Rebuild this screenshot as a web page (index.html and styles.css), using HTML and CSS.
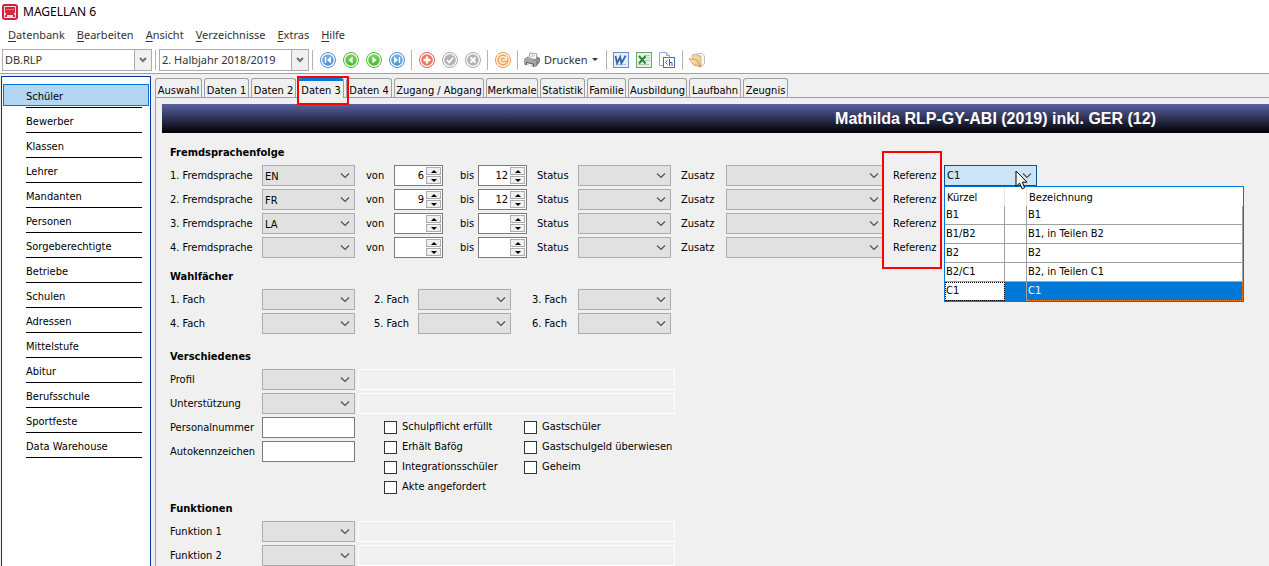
FILE: index.html
```html
<!DOCTYPE html>
<html lang="de">
<head>
<meta charset="utf-8">
<title>MAGELLAN 6</title>
<link rel="stylesheet" href="styles.css">
</head>
<body>
<svg class="defs" aria-hidden="true">
  <defs>
    <linearGradient id="blue" x1="0" y1="0" x2="0" y2="1"><stop offset="0" stop-color="#7fb2ea"/><stop offset="1" stop-color="#4a8fdc"/></linearGradient>
    <linearGradient id="green" x1="0" y1="0" x2="0" y2="1"><stop offset="0" stop-color="#7bd463"/><stop offset="1" stop-color="#48b934"/></linearGradient>
    <linearGradient id="paper" x1="0" y1="0" x2="1" y2="1"><stop offset="0" stop-color="#fff6d8"/><stop offset="1" stop-color="#e3b162"/></linearGradient>
  </defs>
</svg>

<header class="titlebar">
  <svg class="app-icon" viewBox="0 0 16 16"><rect x="0" y="0" width="16" height="16" rx="3" fill="#d81e3f"/><rect x="2" y="2" width="12" height="12" rx="1" fill="#f9dfe0"/><path d="M3 3h10v6H3zM4 9h8v2H4zM3 11h2v2H3zM11 11h2v2h-2z" fill="#d4283c"/><path d="M4 5.500h8" stroke="#e8707c"/></svg>
  <span>MAGELLAN 6</span>
</header>

<nav class="menubar">
  <button><u>D</u>atenbank</button>
  <button><u>B</u>earbeiten</button>
  <button><u>A</u>nsicht</button>
  <button><u>V</u>erzeichnisse</button>
  <button><u>E</u>xtras</button>
  <button><u>H</u>ilfe</button>
</nav>

<div class="toolbar">
  <select class="bar-select" aria-label="Datenbank"><option>DB.RLP</option></select>
  <span class="sep"></span>
  <select class="bar-select" aria-label="Zeitraum"><option>2. Halbjahr 2018/2019</option></select>
  <span class="sep"></span>
  <button class="tool" aria-label="Erster"><svg viewBox="0 0 16 16"><circle cx="8" cy="8" r="7.5" fill="#fff" stroke="#4a8ddb"/><circle cx="8" cy="8" r="5.8" fill="url(#blue)"/><path d="M5.5 5v6" stroke="#fff" stroke-width="1.4"/><path d="M11 4.6v6.8L7 8z" fill="#fff"/></svg></button>
  <button class="tool" aria-label="Zurück"><svg viewBox="0 0 16 16"><circle cx="8" cy="8" r="7.5" fill="#fff" stroke="#4cb938"/><circle cx="8" cy="8" r="5.8" fill="url(#green)"/><path d="M9.6 4.4v7.2L5.4 8z" fill="#fff"/></svg></button>
  <button class="tool" aria-label="Weiter"><svg viewBox="0 0 16 16"><circle cx="8" cy="8" r="7.5" fill="#fff" stroke="#4cb938"/><circle cx="8" cy="8" r="5.8" fill="url(#green)"/><path d="M6.4 4.4v7.2L10.6 8z" fill="#fff"/></svg></button>
  <button class="tool" aria-label="Letzter"><svg viewBox="0 0 16 16"><circle cx="8" cy="8" r="7.5" fill="#fff" stroke="#4a8ddb"/><circle cx="8" cy="8" r="5.8" fill="url(#blue)"/><path d="M10.5 5v6" stroke="#fff" stroke-width="1.4"/><path d="M5 4.6v6.8L9 8z" fill="#fff"/></svg></button>
  <span class="sep"></span>
  <button class="tool" aria-label="Neu"><svg viewBox="0 0 16 16"><circle cx="8" cy="8" r="7.5" fill="#fff" stroke="#e8604c"/><circle cx="8" cy="8" r="5.8" fill="#ee7460"/><path d="M8 4.5v7M4.5 8h7" stroke="#fff" stroke-width="2.4"/></svg></button>
  <button class="tool" aria-label="Speichern"><svg viewBox="0 0 16 16"><circle cx="8" cy="8" r="7.5" fill="#fff" stroke="#a8a8a8"/><circle cx="8" cy="8" r="5.8" fill="#b3b3b3"/><path d="M5 8l2.2 2.5L11 5.5" stroke="#fff" stroke-width="1.6" fill="none"/></svg></button>
  <button class="tool" aria-label="Verwerfen"><svg viewBox="0 0 16 16"><circle cx="8" cy="8" r="7.5" fill="#fff" stroke="#a8a8a8"/><circle cx="8" cy="8" r="5.8" fill="#b3b3b3"/><path d="M5.5 5.5l5 5M10.5 5.5l-5 5" stroke="#fff" stroke-width="1.8"/></svg></button>
  <span class="sep"></span>
  <button class="tool" aria-label="Aktualisieren"><svg viewBox="0 0 16 16"><circle cx="8" cy="8" r="7.5" fill="#fff" stroke="#f0953c"/><circle cx="8" cy="8" r="5.8" fill="#f5a75c"/><path d="M10.8 10A3.4 3.4 0 1 1 11 6.200M11.400 4.500v3.300H8.500L7 9" stroke="#fff" stroke-width="1.2" fill="none"/></svg></button>
  <span class="sep"></span>
  <button class="tool print"><svg viewBox="0 0 16 16"><path d="M5 6l1-5 7 1-1 6z" fill="#fff" stroke="#888" stroke-width=".8"/><path d="M7 3l4 .6M6.7 4.6l4 .6" stroke="#aaa" stroke-width=".7"/><path d="M0 7l4-2.500 1 2 7 1 1-3 3 1.500V10l-4 5-12-2.500z" fill="#858585"/><path d="M0 7l4-1.500L12 9v6L0 12.500z" fill="#a6a6a6"/><path d="M2 10l8 1.800v3L2 13z" fill="#555"/><path d="M3 11l6 1.500-.5 2.500L3 13.800z" fill="#e8e8e8"/><circle cx="13.600" cy="8.500" r=".8" fill="#8fd06a"/></svg><span>Drucken</span><i class="caret"></i></button>
  <span class="sep"></span>
  <button class="tool" aria-label="Word"><svg viewBox="0 0 16 16"><rect x=".5" y=".5" width="15" height="15" fill="#e6eefb" stroke="#6b8fc9"/><path d="M3 12.500h10M11 4h3" stroke="#a9c1e8"/><path d="M2.500 4l1.600 7.200L7.200 5l1.200 6.200L12.500 4" stroke="#3464b0" stroke-width="1.800" fill="none"/></svg></button>
  <button class="tool" aria-label="Excel"><svg viewBox="0 0 16 16"><rect x=".5" y=".5" width="15" height="15" fill="#e5f3e2" stroke="#6fa56d"/><path d="M9 3.500h5M9 6h5M9 8.500h5M2 12.500h11" stroke="#a7cfa3"/><path d="M3 4l6.500 7.500M9.500 4L3 11.500" stroke="#2f8340" stroke-width="2" fill="none"/></svg></button>
  <button class="tool" aria-label="HTML"><svg viewBox="0 0 16 16"><path d="M.5.5h7l3 3v10H.5z" fill="#fff" stroke="#92acd6"/><path d="M7.500.5v3h3" fill="#dbe6f7" stroke="#92acd6"/><rect x="4.500" y="5.500" width="11" height="10" fill="#fff" stroke="#4b6ea9"/><path d="M8.500 8.500L6.500 10.500l2 2M10.500 7v7M10.500 10.500h2.500V14" stroke="#3560a8" fill="none"/></svg></button>
  <span class="sep"></span>
  <button class="tool" aria-label="Öffnen"><svg viewBox="0 0 16 16"><path d="M8 1.500h5l2.500 2.500v8L12 14.500z" fill="#f7f7f7" stroke="#aaa" stroke-width=".7"/><path d="M3 3l4-1 1.500 1.500 3.500.5V14L4 11z" fill="#f1d59a" stroke="#c39a52" stroke-width=".6"/><path d="M0 6.500l8 1.500 4 7-7.500-2z" fill="url(#paper)" stroke="#bd8a3c" stroke-width=".7"/></svg></button>
</div>

<div class="workspace">
  <nav class="sidebar">
    <a class="active" href="#"><span>Schüler</span></a>
    <a href="#"><span>Bewerber</span></a>
    <a href="#"><span>Klassen</span></a>
    <a href="#"><span>Lehrer</span></a>
    <a href="#"><span>Mandanten</span></a>
    <a href="#"><span>Personen</span></a>
    <a href="#"><span>Sorgeberechtigte</span></a>
    <a href="#"><span>Betriebe</span></a>
    <a href="#"><span>Schulen</span></a>
    <a href="#"><span>Adressen</span></a>
    <a href="#"><span>Mittelstufe</span></a>
    <a href="#"><span>Abitur</span></a>
    <a href="#"><span>Berufsschule</span></a>
    <a href="#"><span>Sportfeste</span></a>
    <a href="#"><span>Data Warehouse</span></a>
  </nav>

  <main class="main">
    <div class="tabs" role="tablist">
      <button role="tab">Auswahl</button>
      <button role="tab">Daten 1</button>
      <button role="tab">Daten 2</button>
      <button role="tab" class="current" aria-selected="true">Daten 3<i class="mark mark-tab"></i></button>
      <button role="tab">Daten 4</button>
      <button role="tab">Zugang / Abgang</button>
      <button role="tab">Merkmale</button>
      <button role="tab">Statistik</button>
      <button role="tab">Familie</button>
      <button role="tab">Ausbildung</button>
      <button role="tab">Laufbahn</button>
      <button role="tab">Zeugnis</button>
    </div>

    <div class="page">
      <h1 class="banner">Mathilda RLP-GY-ABI (2019) inkl. GER (12)</h1>

      <form class="form">
        <section>
          <h2>Fremdsprachenfolge</h2>
          <div class="languages">
            <label for="l1">1. Fremdsprache</label><select id="l1"><option>EN</option></select>
            <label for="v1">von</label><span class="spin"><input id="v1" value="6"><span><button type="button" class="up" aria-label="mehr"></button><button type="button" class="down" aria-label="weniger"></button></span></span>
            <label for="b1">bis</label><span class="spin"><input id="b1" value="12"><span><button type="button" class="up" aria-label="mehr"></button><button type="button" class="down" aria-label="weniger"></button></span></span>
            <label for="s1">Status</label><select id="s1"><option></option></select>
            <label for="z1">Zusatz</label><select id="z1" class="wide"><option></option></select>
            <label for="r1">Referenz</label>
            <div class="lookup">
              <select id="r1" class="open"><option>C1</option></select>
              <table class="list">
                <thead><tr><th class="key">Kürzel</th><th class="gap"></th><th>Bezeichnung</th></tr></thead>
                <tbody>
                  <tr><td>B1</td><td></td><td>B1</td></tr>
                  <tr><td>B1/B2</td><td></td><td>B1, in Teilen B2</td></tr>
                  <tr><td>B2</td><td></td><td>B2</td></tr>
                  <tr><td>B2/C1</td><td></td><td>B2, in Teilen C1</td></tr>
                  <tr class="picked"><td>C1</td><td></td><td>C1</td></tr>
                </tbody>
              </table>
              <svg class="pointer" viewBox="0 0 13 20"><path d="M1 1v15.500l3.600-3.400 2.500 5.700 2.600-1.100-2.500-5.500H12z" fill="#fff" stroke="#000"/></svg>
            </div>

            <label for="l2">2. Fremdsprache</label><select id="l2"><option>FR</option></select>
            <label for="v2">von</label><span class="spin"><input id="v2" value="9"><span><button type="button" class="up" aria-label="mehr"></button><button type="button" class="down" aria-label="weniger"></button></span></span>
            <label for="b2">bis</label><span class="spin"><input id="b2" value="12"><span><button type="button" class="up" aria-label="mehr"></button><button type="button" class="down" aria-label="weniger"></button></span></span>
            <label for="s2">Status</label><select id="s2"><option></option></select>
            <label for="z2">Zusatz</label><select id="z2" class="wide"><option></option></select>
            <span class="last">Referenz</span>

            <label for="l3">3. Fremdsprache</label><select id="l3"><option>LA</option></select>
            <label for="v3">von</label><span class="spin"><input id="v3"><span><button type="button" class="up" aria-label="mehr"></button><button type="button" class="down" aria-label="weniger"></button></span></span>
            <label for="b3">bis</label><span class="spin"><input id="b3"><span><button type="button" class="up" aria-label="mehr"></button><button type="button" class="down" aria-label="weniger"></button></span></span>
            <label for="s3">Status</label><select id="s3"><option></option></select>
            <label for="z3">Zusatz</label><select id="z3" class="wide"><option></option></select>
            <span class="last">Referenz</span>

            <label for="l4">4. Fremdsprache</label><select id="l4"><option></option></select>
            <label for="v4">von</label><span class="spin"><input id="v4"><span><button type="button" class="up" aria-label="mehr"></button><button type="button" class="down" aria-label="weniger"></button></span></span>
            <label for="b4">bis</label><span class="spin"><input id="b4"><span><button type="button" class="up" aria-label="mehr"></button><button type="button" class="down" aria-label="weniger"></button></span></span>
            <label for="s4">Status</label><select id="s4"><option></option></select>
            <label for="z4">Zusatz</label><select id="z4" class="wide"><option></option></select>
            <span class="last">Referenz<i class="mark mark-ref"></i></span>
          </div>
        </section>

        <section class="near">
          <h2>Wahlfächer</h2>
          <div class="subjects">
            <label for="f1">1. Fach</label><select id="f1"><option></option></select>
            <label for="f2">2. Fach</label><select id="f2"><option></option></select>
            <label for="f3">3. Fach</label><select id="f3"><option></option></select>
            <label for="f4">4. Fach</label><select id="f4"><option></option></select>
            <label for="f5">5. Fach</label><select id="f5"><option></option></select>
            <label for="f6">6. Fach</label><select id="f6"><option></option></select>
          </div>
        </section>

        <section class="far">
          <h2>Verschiedenes</h2>
          <div class="pairs">
            <label for="p1">Profil</label><select id="p1"><option></option></select><input class="readonly" aria-label="Profil Bezeichnung" readonly>
            <label for="p2">Unterstützung</label><select id="p2"><option></option></select><input class="readonly" aria-label="Unterstützung Bezeichnung" readonly>
          </div>
          <div class="extras">
            <div class="pairs numbers">
              <label for="n1">Personalnummer</label><input id="n1">
              <label for="n2">Autokennzeichen</label><input id="n2">
            </div>
            <div class="checks">
              <label><input type="checkbox">Schulpflicht erfüllt</label>
              <label><input type="checkbox">Gastschüler</label>
              <label><input type="checkbox">Erhält Bafög</label>
              <label><input type="checkbox">Gastschulgeld überwiesen</label>
              <label><input type="checkbox">Integrationsschüler</label>
              <label><input type="checkbox">Geheim</label>
              <label><input type="checkbox">Akte angefordert</label>
            </div>
          </div>
        </section>

        <section>
          <h2>Funktionen</h2>
          <div class="pairs">
            <label for="k1">Funktion 1</label><select id="k1"><option></option></select><input class="readonly" aria-label="Funktion 1 Bezeichnung" readonly>
            <label for="k2">Funktion 2</label><select id="k2"><option></option></select><input class="readonly" aria-label="Funktion 2 Bezeichnung" readonly>
          </div>
        </section>
      </form>
    </div>
  </main>
</div>
</body>
</html>
```
FILE: styles.css
```css
* { box-sizing: border-box; }

body {
  margin: 0;
  height: 100vh;
  overflow: hidden;
  display: flex;
  flex-direction: column;
  background: #fff;
  color: #000;
  font: 11px/14px "DejaVu Sans Condensed", "Noto Sans", sans-serif;
}

button, input, select {
  margin: 0;
  padding: 0;
  border: 0;
  border-radius: 0;
  background: none;
  color: inherit;
  font: inherit;
  appearance: none;
}

.defs { position: absolute; width: 0; height: 0; }

.titlebar {
  display: flex;
  align-items: center;
  gap: 5px;
  height: 23px;
  padding-left: 2px;
  font: 12px/16px "Noto Sans", sans-serif;
}
.app-icon { width: 16px; height: 16px; }

.menubar {
  display: flex;
  align-items: center;
  gap: 12px;
  height: 24px;
  padding-left: 8px;
  color: #333;
  font: 11px/16px "Noto Sans", sans-serif;
}
.menubar u { text-underline-offset: 2px; }

.toolbar {
  display: flex;
  align-items: center;
  height: 27px;
  padding: 0 2px 1px;
  border-bottom: 1px solid #a0a0a0;
  color: #333;
  font: 11px/16px "Noto Sans", sans-serif;
}
.bar-select {
  width: 150px;
  height: 22px;
  padding: 0 18px 0 2px;
  border: 1px solid #ababab;
  background:
    url("data:image/svg+xml,%3Csvg xmlns='http://www.w3.org/2000/svg' width='17' height='20'%3E%3Cpath d='M0 0h17v20H0z' fill='%23f0f0f0'/%3E%3Cpath d='M.5 0v20' stroke='%23ababab'/%3E%3Cpath d='M6 8l3 3 3-3' fill='none' stroke='%23707070' stroke-width='2'/%3E%3C/svg%3E") right center no-repeat #fff;
}
.sep { flex: none; width: 1px; height: 20px; margin: 0 3px; background: #b5b5b5; }
.tool { display: flex; align-items: center; justify-content: center; width: 23px; height: 22px; }
.tool svg { flex: none; width: 16px; height: 16px; }
.print { width: auto; gap: 4px; padding: 0 5px 0 3px; }
.caret { border: 3px solid transparent; border-top-color: #333; border-bottom: 0; }

.workspace { flex: 1; display: flex; min-height: 0; gap: 4px; padding: 2px 0 0 1px; background: #f0f0f0; }

.sidebar {
  flex: none;
  width: 150px;
  padding: 6px 1px 0;
  border: 1px solid #003399;
  border-bottom: 0;
  background: #fff;
}
.sidebar a {
  display: block;
  height: 25px;
  padding: 0 7px 0 23px;
  border-top: 1px solid transparent;
  color: #000;
  text-decoration: none;
}
.sidebar span { display: block; height: 24px; border-bottom: 1px solid #000; line-height: 26px; }
.sidebar .active { background: linear-gradient(#b3d7f3, #b3d7f3) 1px 1px / calc(100% - 2px) 20px no-repeat, linear-gradient(#0078d7, #0078d7) 0 0 / 100% 22px no-repeat; }

.main { flex: 1; min-width: 0; display: flex; flex-direction: column; padding-top: 2px; }
.tabs {
  display: grid;
  grid-template-columns: 47px 45px 45px 46px 46px 90px 52px 45px 39px 59px 52px 45px;
  column-gap: 2px;
  height: 20px;
  border-bottom: 1px solid #a0a0a0;
}
.tabs button {
  position: relative;
  display: flex;
  justify-content: center;
  height: 19px;
  padding-top: 5px;
  border: 1px solid #a0a0a0;
  border-bottom: 0;
  border-radius: 3px 3px 0 0;
  white-space: nowrap;
  line-height: 14px;
}
.tabs .current { height: 20px; padding-top: 3px; border-top: 3px solid #0078d7; background: #f0f0f0; }
.mark { position: absolute; z-index: 2; border: 2px solid #f00; }
.mark-tab { left: -2px; right: -6px; top: -5px; bottom: -7px; }
.mark-ref { left: -11px; bottom: -8px; width: 60px; height: 118px; }

.page { flex: 1; padding: 6px 0 0 6px; border-left: 1px solid #a0a0a0; }
.banner {
  margin: 0;
  padding-right: 113px;
  background: linear-gradient(#5a63a4, #000);
  color: #fff;
  font: bold 16px/29px "Liberation Sans", Arial, sans-serif;
  text-align: right;
}

.form { padding: 10px 0 0 8px; }
.form section.near { margin-top: 6px; }
.form section.far { margin-top: 10px; }
.form h2 { margin: 0 0 2px; font-size: 11px; line-height: 20px; }

.form select {
  width: 93px;
  height: 21px;
  padding: 0 16px 0 2px;
  border: 1px solid #adadad;
  background:
    url("data:image/svg+xml,%3Csvg xmlns='http://www.w3.org/2000/svg' width='16' height='19'%3E%3Cpath d='M3 7.500l4 4 4-4' fill='none' stroke='%23505050' stroke-width='1.200'/%3E%3C/svg%3E") right center no-repeat #e1e1e1;
}
.form select.wide { width: 158px; }
.form select.open { border-color: #005499; background-color: #cce4f7; }
.form input { width: 93px; height: 21px; border: 1px solid #7a7a7a; background: #fff; }

.languages, .subjects, .pairs { display: grid; grid-auto-rows: 24px; align-items: start; justify-content: start; line-height: 22px; }
.languages { grid-template-columns: 92px 104px 28px 66px 18px 59px 41px 103px 45px 167px 51px 93px; }
.languages .last { position: relative; grid-column: 11 / 13; height: 24px; }
.subjects { grid-template-columns: 92px 112px 44px 114px 46px 93px; }
.pairs { grid-template-columns: 92px 96px 317px; }
.pairs .readonly { width: 317px; border-color: #fff; background: #f0f0f0; }
.numbers { grid-template-columns: 92px 93px; }
.extras { display: flex; gap: 29px; }

.spin { display: flex; width: 49px; height: 21px; padding: 1px; border: 1px solid #7a7a7a; background: #fff; line-height: 14px; }
.form .spin input { flex: 1; width: 0; height: 17px; border: 0; padding-right: 2px; text-align: right; }
.spin span { display: flex; flex-direction: column; gap: 1px; width: 15px; }
.spin button { flex: 1; border: 1px solid #adadad; background: #f0f0f0; display: grid; place-items: center; }
.spin button::before { content: ""; border: 3px solid transparent; }
.spin .up::before { border-top: 0; border-bottom-color: #000; }
.spin .down::before { border-bottom: 0; border-top-color: #000; }

.lookup { position: relative; height: 21px; line-height: 14px; }
.list {
  position: absolute;
  z-index: 3;
  top: 21px;
  left: 0;
  width: 300px;
  table-layout: fixed;
  border-collapse: separate;
  border-spacing: 0;
  border: 1px solid #0078d7;
  background: #fff;
}
.list th, .list td { height: 19px; padding: 0 1px; border: solid #a0a0a0; border-width: 0 1px 1px 0; font-weight: normal; text-align: left; white-space: nowrap; }
.list th { padding: 2px 2px 0; border-color: #e5e5e5; border-bottom: 0; }
.list th:last-child { border-right: 0; }
.key { width: 60px; }
.gap { width: 22px; }
.picked td { background: #0078d7; color: #fff; border-bottom-color: #0078d7; }
.picked td:first-child { background: #fff; color: #000; outline: 1px dotted #000; outline-offset: -1px; }
.picked td:last-child { border-bottom: 1px dotted #ff8728; border-right: 1px dotted #ff8728; }
.pointer { position: absolute; z-index: 4; left: 71px; top: 5px; width: 13px; height: 20px; }

.checks { display: grid; grid-template-columns: 140px auto; grid-auto-rows: 20px; padding-bottom: 2px; }
.checks label { display: flex; align-items: center; gap: 5px; }
.form .checks input { width: 13px; height: 13px; border: 1px solid #333; }
.checks input:checked { background: #0078d7; }
```
